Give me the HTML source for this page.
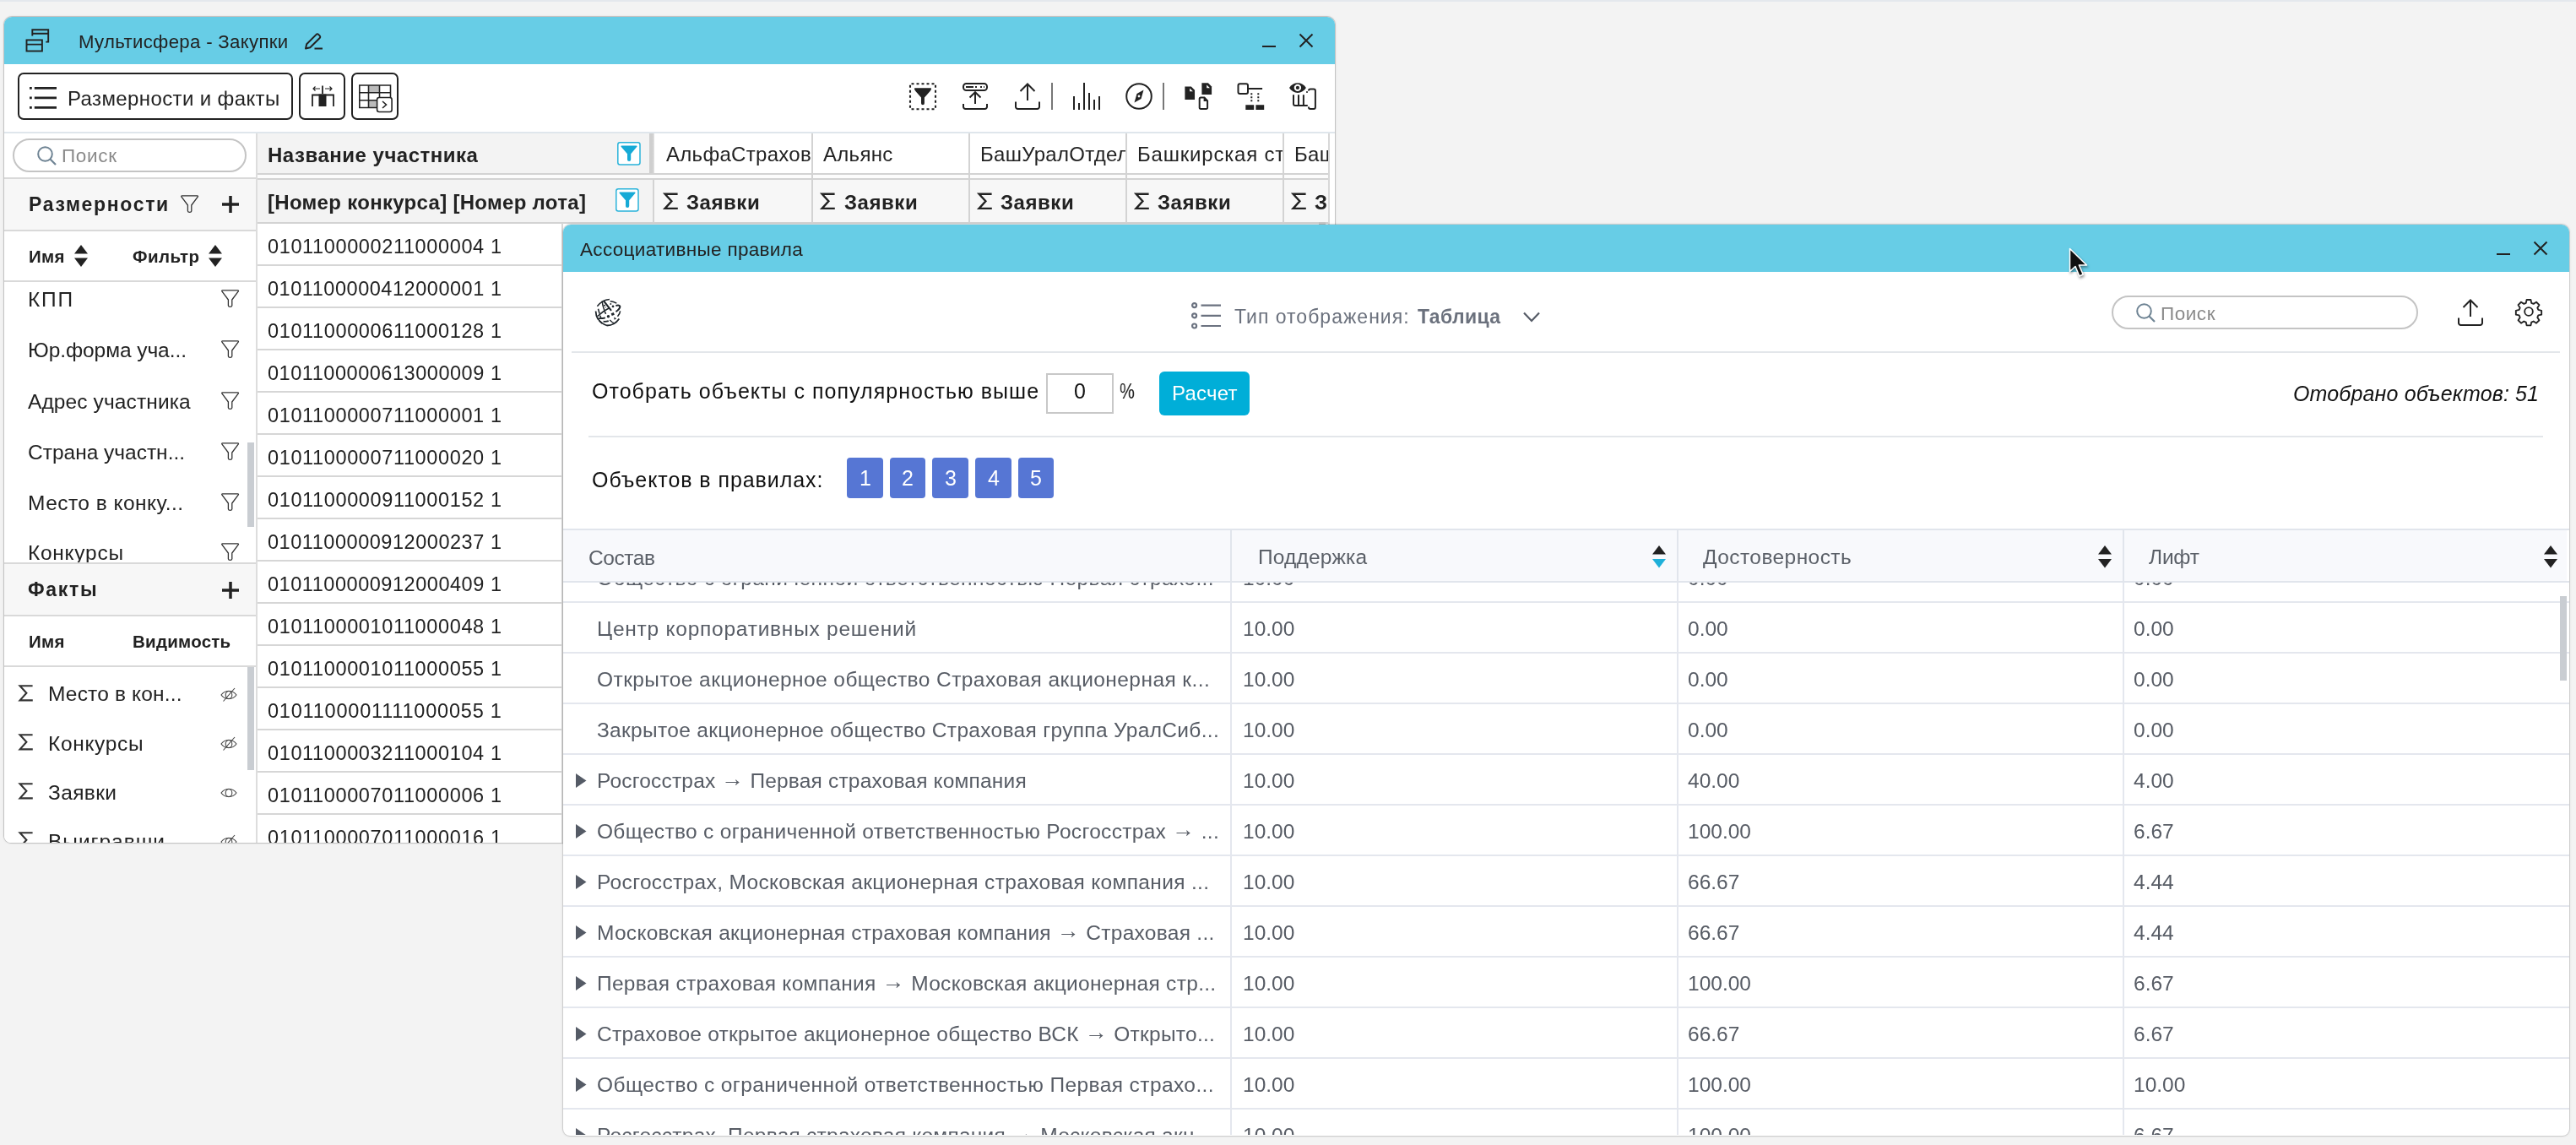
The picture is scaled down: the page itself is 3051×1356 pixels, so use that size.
<!DOCTYPE html>
<html lang="ru"><head><meta charset="utf-8"><title>Мультисфера - Закупки</title>
<style>
html,body{margin:0;padding:0}
body{width:3051px;height:1356px;overflow:hidden;background:#f3f3f3;position:relative;font-family:"Liberation Sans",sans-serif;color:#222}
div,span.t,svg{position:absolute;box-sizing:border-box}
span.t{white-space:nowrap;line-height:1;will-change:transform}
svg{overflow:visible}
span.t i{font-style:normal;position:relative;top:-2.5px;font-size:1.1em;line-height:0}
.k{fill:none;stroke:#222}
.f{fill:#222;stroke:none}
</style></head><body>
<div style="left:0.0px;top:0.0px;width:3051.0px;height:1.6px;background:#e4e8ed"></div>
<div style="left:5.0px;top:20.0px;width:1576.0px;height:978.0px;border-radius:9px 9px 8px 8px;overflow:hidden;background:#fff;box-shadow:0 0 0 1px rgba(0,0,0,.13),0 0 3px rgba(0,0,0,.22)"><div style="left:0.0px;top:0.0px;width:1576.0px;height:56.0px;background:#67cde6"></div>
<svg style="left:25.0px;top:14.0px;" width="29.0" height="28.0" viewBox="0 0 29 28" stroke-width="2"><path class="k" stroke-width="1.9" d="M8.3 8.6V1.2H27.2V15.6H24.3M8.3 5.7H27.2"/><rect class="k" stroke-width="1.9" x="1.5" y="13.4" width="18.4" height="13.1"/><path class="k" stroke-width="1.9" d="M1.5 18.6H19.9"/></svg>
<span class="t" style="left:88.3px;top:18.7px;font-size:22.2px;letter-spacing:0.33px;">Мультисфера - Закупки</span>
<svg style="left:355.0px;top:18.5px;" width="23.0" height="20.0" viewBox="0 0 23 20" stroke-width="2"><path class="k" d="M2 18.5l1.2-5.2L14.6 1.9a1.8 1.8 0 0 1 2.6 0l1.5 1.5a1.8 1.8 0 0 1 0 2.6L7.3 17.3z" stroke-linejoin="round"/><path class="k" d="M12.5 18.6H22"/></svg>
<div style="left:1490.0px;top:33.8px;width:16.0px;height:2.2px;background:#222"></div>
<svg style="left:1534.0px;top:20.0px;" width="16.0" height="16.0" viewBox="0 0 16 16" stroke-width="2"><path class="k" d="M0.5 0.5L15.5 15.5M15.5 0.5L0.5 15.5"/></svg>
<div style="left:0.0px;top:56.0px;width:1576.0px;height:81.5px;background:#fff;border-bottom:2px solid #dfe6ec"></div>
<div style="left:16.0px;top:66.4px;width:326.4px;height:55.3px;border:2px solid #222;border-radius:7px"></div>
<svg style="left:30.0px;top:83.0px;" width="32.0" height="26.0" viewBox="0 0 32 26" stroke-width="2"><path class="k" stroke-width="2.8" d="M5.8 1.4H32M5.8 12.9H32M5.8 24.3H32"/><path class="f" d="M0 0h2.8v2.8H0zM0 11.5h2.8v2.8H0zM0 22.9h2.8v2.8H0z"/></svg>
<span class="t" style="left:74.6px;top:84.5px;font-size:24px;letter-spacing:0.38px;">Размерности и факты</span>
<div style="left:349.2px;top:66.4px;width:55.3px;height:55.3px;border:2px solid #222;border-radius:7px"></div>
<svg style="left:364.0px;top:81.0px;" width="27.0" height="26.0" viewBox="0 0 27 26" stroke-width="2"><path class="f" d="M8.5 10.5h9V25h-9z"/><path class="k" stroke-width="1.8" d="M1 25V11.5H26V25M13 0.5V10"/><path class="k" stroke-width="1.2" d="M2 4H10M16 4H24M4.5 1.5L2 4l2.5 2.5M21.5 1.5L24 4l-2.5 2.5"/></svg>
<div style="left:411.3px;top:66.4px;width:55.3px;height:55.3px;border:2px solid #222;border-radius:7px"></div>
<svg style="left:420.0px;top:80.0px;" width="40.0" height="33.0" viewBox="0 0 40 33" stroke-width="2"><path fill="#bbb" d="M11.5 1h13v8.5h-13zM11.5 19h13v8h-13z"/><path class="k" stroke-width="1.6" d="M0.8 1H37.5V27.5H0.8zM0.8 9.7H37.5M0.8 18.7H37.5M11.5 1V27.5M24.5 1V27.5"/><rect x="21.6" y="15.5" width="17.5" height="17" rx="2.5" fill="#fff" stroke="#222" stroke-width="1.6"/><path class="k" stroke-width="1.6" d="M28 20l4.5 4-4.5 4"/></svg>
<svg style="left:1072.0px;top:77.8px;" width="32.0" height="32.0" viewBox="0 0 32 32" stroke-width="2"><rect class="k" x="1" y="1.2" width="30" height="30" stroke-width="2.1" stroke-dasharray="3 3" stroke-dashoffset="4.5"/><path class="f" d="M6.6 6.2H25.4Q26.3 6.4 26 7.6Q25.6 9 24.6 10L17.9 17.6V24.2a1.95 1.95 0 0 1-3.9 0V17.6L7.4 10Q6.4 9 6 7.6Q5.7 6.4 6.6 6.2z"/></svg>
<svg style="left:1135.0px;top:77.8px;" width="30.0" height="32.0" viewBox="0 0 30 32" stroke-width="2"><rect class="k" x="1" y="1" width="28" height="8" rx="3.5"/><path class="k" d="M4 5H19" stroke-dasharray="9 2 2 2"/><path class="k" d="M21 5h2M25 5h1"/><path class="k" d="M15 25V11.5M8.5 17.5L15 11.2l6.5 6.3"/><path class="k" d="M1 25v3.5a2.5 2.5 0 0 0 2.5 2.5h23a2.5 2.5 0 0 0 2.5-2.5V25"/></svg>
<svg style="left:1197.0px;top:77.8px;" width="30.0" height="32.0" viewBox="0 0 30 32" stroke-width="2"><path class="k" d="M15 21V1.6M6.5 10L15 1.5l8.5 8.5"/><path class="k" d="M1 22.5v6a2.5 2.5 0 0 0 2.5 2.5h23a2.5 2.5 0 0 0 2.5-2.5v-6"/></svg>
<div style="left:1240.0px;top:77.8px;width:2.0px;height:32.0px;background:#777"></div>
<svg style="left:1266.0px;top:77.8px;" width="32.0" height="32.0" viewBox="0 0 32 32" stroke-width="2"><path class="k" d="M1 32V16M7 32V24M13 32V0M19 32V12M25 32V20M31 32V16"/></svg>
<svg style="left:1327.6px;top:77.8px;" width="32.0" height="32.0" viewBox="0 0 32 32" stroke-width="2"><circle class="k" cx="16" cy="16" r="14.8"/><path class="f" d="M21.5 8.5L18.5 19 10.5 23.5 13.5 13z"/><circle cx="16" cy="16" r="1.4" fill="#fff"/></svg>
<div style="left:1372.0px;top:77.8px;width:2.0px;height:32.0px;background:#777"></div>
<svg style="left:1397.7px;top:77.8px;" width="33.0" height="32.0" viewBox="0 0 33 32" stroke-width="2"><path class="f" d="M0.4 4.4H7.8L12.05 8.7V20H0.4z"/><path class="f" d="M20.4 0.3H27.9L32.1 4.6V13.9H20.4z"/><path fill="#fff" d="M6.1 6.5V10.2H9.9zM26.2 2.6V6.2H30z"/><path class="k" d="M19.2 17.6H23.5L27.1 21.3V29.5a1.5 1.5 0 0 1-1.5 1.5H19.2a1.5 1.5 0 0 1-1.5-1.5V19.1a1.5 1.5 0 0 1 1.5-1.5z"/><path class="f" d="M22.6 17.6V22H27.1L23.5 17.6z"/></svg>
<svg style="left:1459.7px;top:77.8px;" width="33.0" height="32.0" viewBox="0 0 33 32" stroke-width="2"><rect class="k" x="1.5" y="1.3" width="11.5" height="11.6" rx="2"/><path class="k" d="M13 7.1H30.1"/><path class="k" d="M17.3 12.2V23M25.3 12.2V23" stroke-dasharray="2 2.05"/><path class="f" d="M10.3 26.3h9.9V32h-9.9zM22.4 26.3h9.8V32h-9.8z"/></svg>
<svg style="left:1522.0px;top:77.8px;" width="33.0" height="32.0" viewBox="0 0 33 32" stroke-width="2"><path class="f" d="M0 6.1C4.5-1.6 15.5-1.6 19.9 6.1 15.5 13.8 4.5 13.8 0 6.1z"/><circle cx="9.9" cy="5.9" r="4.2" fill="#fff"/><circle class="f" cx="9.9" cy="5.9" r="2.1"/><path class="k" d="M5 14.2V25a2 2 0 0 0 2 2H21.8M11 14.2V27M16.9 14.2V27"/><path class="k" d="M23 9.6V9.4a2 2 0 0 1 2-2h3.9a2 2 0 0 1 2 2V28.9a2 2 0 0 1-2 2H25a2 2 0 0 1-2-2V28.4"/><circle class="f" cx="21" cy="11" r="1.1"/></svg>
<div style="left:0.0px;top:138.0px;width:298.0px;height:840.0px;background:#fff"></div>
<div style="left:298.0px;top:138.0px;width:2.0px;height:840.0px;background:#ddd"></div>
<div style="left:10.2px;top:144.3px;width:277.3px;height:39.3px;border:2px solid #c4c4c4;border-radius:20px;background:#fff"></div>
<svg style="left:39.0px;top:152.5px;" width="23.0" height="23.0" viewBox="0 0 23 23" stroke-width="2"><circle cx="9.5" cy="9.5" r="8.3" fill="none" stroke="#6f8494" stroke-width="2"/><path d="M15.5 15.5L22 22" stroke="#6f8494" stroke-width="2.2" fill="none"/></svg>
<span class="t" style="left:67.5px;top:154.4px;font-size:22.5px;color:#8a8a8a;letter-spacing:0.69px;">Поиск</span>
<div style="left:0.0px;top:189.5px;width:298.0px;height:2.0px;background:#d9d9d9"></div>
<div style="left:0.0px;top:191.5px;width:298.0px;height:60.0px;background:#f7f7f7"></div>
<span class="t" style="left:28.5px;top:210.5px;font-size:23px;font-weight:700;letter-spacing:1.66px;">Размерности</span>
<svg style="left:209.0px;top:211.0px;" width="21.0" height="22.0" viewBox="0 0 21 22" stroke-width="2"><path d="M1.6 0.8H19.6Q21 1 20.2 2.2L12.8 12V19Q12.6 20.3 10.6 20.3Q8.6 20.3 8.4 19V12L1 2.2Q0.2 1 1.6 0.8z" fill="none" stroke="#333" stroke-width="1.3" stroke-linejoin="round"/></svg>
<svg style="left:258.0px;top:212.0px;" width="20.0" height="20.0" viewBox="0 0 20 20" stroke-width="2"><path d="M10 0V20M0 10H20" fill="none" stroke="#222" stroke-width="3.5"/></svg>
<div style="left:0.0px;top:251.5px;width:298.0px;height:2.0px;background:#d9d9d9"></div>
<span class="t" style="left:28.5px;top:273.8px;font-size:20.5px;font-weight:700;letter-spacing:0.31px;">Имя</span>
<span class="t" style="left:152.0px;top:273.8px;font-size:20.5px;font-weight:700;letter-spacing:0.50px;">Фильтр</span>
<svg style="left:83.0px;top:270.0px;" width="16.0" height="26.0" viewBox="0 0 16 26" stroke-width="2"><path class="f" d="M8 0L16 10.5H0zM8 26L16 15.5H0z"/></svg>
<svg style="left:242.0px;top:270.0px;" width="16.0" height="26.0" viewBox="0 0 16 26" stroke-width="2"><path class="f" d="M8 0L16 10.5H0zM8 26L16 15.5H0z"/></svg>
<div style="left:0.0px;top:312.0px;width:298.0px;height:2.0px;background:#d9d9d9"></div>
<span class="t" style="left:28.0px;top:323.0px;font-size:24.5px;letter-spacing:1.75px;">КПП</span>
<svg style="left:257.4px;top:323.4px;" width="21.2" height="21.0" viewBox="0 0 21.2 21" stroke-width="2"><path d="M1.6 0.8H19.6Q21 1 20.2 2.2L12.8 12V19Q12.6 20.3 10.6 20.3Q8.6 20.3 8.4 19V12L1 2.2Q0.2 1 1.6 0.8z" fill="none" stroke="#333" stroke-width="1.3" stroke-linejoin="round"/></svg>
<span class="t" style="left:28.0px;top:383.0px;font-size:24.5px;letter-spacing:-0.07px;">Юр.форма уча...</span>
<svg style="left:257.4px;top:383.4px;" width="21.2" height="21.0" viewBox="0 0 21.2 21" stroke-width="2"><path d="M1.6 0.8H19.6Q21 1 20.2 2.2L12.8 12V19Q12.6 20.3 10.6 20.3Q8.6 20.3 8.4 19V12L1 2.2Q0.2 1 1.6 0.8z" fill="none" stroke="#333" stroke-width="1.3" stroke-linejoin="round"/></svg>
<span class="t" style="left:28.0px;top:444.0px;font-size:24.5px;letter-spacing:0.11px;">Адрес участника</span>
<svg style="left:257.4px;top:444.4px;" width="21.2" height="21.0" viewBox="0 0 21.2 21" stroke-width="2"><path d="M1.6 0.8H19.6Q21 1 20.2 2.2L12.8 12V19Q12.6 20.3 10.6 20.3Q8.6 20.3 8.4 19V12L1 2.2Q0.2 1 1.6 0.8z" fill="none" stroke="#333" stroke-width="1.3" stroke-linejoin="round"/></svg>
<span class="t" style="left:28.0px;top:504.0px;font-size:24.5px;letter-spacing:-0.01px;">Страна участн...</span>
<svg style="left:257.4px;top:504.4px;" width="21.2" height="21.0" viewBox="0 0 21.2 21" stroke-width="2"><path d="M1.6 0.8H19.6Q21 1 20.2 2.2L12.8 12V19Q12.6 20.3 10.6 20.3Q8.6 20.3 8.4 19V12L1 2.2Q0.2 1 1.6 0.8z" fill="none" stroke="#333" stroke-width="1.3" stroke-linejoin="round"/></svg>
<span class="t" style="left:28.0px;top:563.7px;font-size:24.5px;letter-spacing:0.46px;">Место в конку...</span>
<svg style="left:257.4px;top:564.1px;" width="21.2" height="21.0" viewBox="0 0 21.2 21" stroke-width="2"><path d="M1.6 0.8H19.6Q21 1 20.2 2.2L12.8 12V19Q12.6 20.3 10.6 20.3Q8.6 20.3 8.4 19V12L1 2.2Q0.2 1 1.6 0.8z" fill="none" stroke="#333" stroke-width="1.3" stroke-linejoin="round"/></svg>
<span class="t" style="left:28.0px;top:623.0px;font-size:24.5px;letter-spacing:0.73px;">Конкурсы</span>
<svg style="left:257.4px;top:623.4px;" width="21.2" height="21.0" viewBox="0 0 21.2 21" stroke-width="2"><path d="M1.6 0.8H19.6Q21 1 20.2 2.2L12.8 12V19Q12.6 20.3 10.6 20.3Q8.6 20.3 8.4 19V12L1 2.2Q0.2 1 1.6 0.8z" fill="none" stroke="#333" stroke-width="1.3" stroke-linejoin="round"/></svg>
<div style="left:288.0px;top:504.0px;width:8.0px;height:100.0px;background:#c9cdd2"></div>
<div style="left:0.0px;top:646.0px;width:298.0px;height:2.0px;background:#d9d9d9"></div>
<div style="left:0.0px;top:648.0px;width:298.0px;height:60.0px;background:#f7f7f7"></div>
<span class="t" style="left:28.0px;top:667.3px;font-size:23px;font-weight:700;letter-spacing:1.69px;">Факты</span>
<svg style="left:258.0px;top:669.0px;" width="20.0" height="20.0" viewBox="0 0 20 20" stroke-width="2"><path d="M10 0V20M0 10H20" fill="none" stroke="#222" stroke-width="3.5"/></svg>
<div style="left:0.0px;top:708.0px;width:298.0px;height:2.0px;background:#d9d9d9"></div>
<span class="t" style="left:28.5px;top:729.6px;font-size:20.5px;font-weight:700;letter-spacing:0.31px;">Имя</span>
<span class="t" style="left:152.4px;top:729.6px;font-size:20.5px;font-weight:700;letter-spacing:0.25px;">Видимость</span>
<div style="left:0.0px;top:767.5px;width:298.0px;height:2.0px;background:#d9d9d9"></div>
<svg style="left:15.6px;top:791.2px;" width="19.0" height="19.7" viewBox="0 0 19 19.7" stroke-width="2"><path d="M17.6 1.3H2.6L10.4 9.8 2.6 18.4H17.8" fill="none" stroke="#333" stroke-width="2.1"/></svg>
<span class="t" style="left:52.0px;top:790.4px;font-size:24.5px;letter-spacing:0.17px;">Место в кон...</span>
<svg style="left:256.0px;top:795.8px;" width="20.0" height="14.0" viewBox="0 0 20 14" stroke-width="2"><path d="M1 7C5 1 15 1 19 7 15 13 5 13 1 7z" fill="none" stroke="#444" stroke-width="1.1"/><ellipse cx="10" cy="7" rx="3.8" ry="4.6" fill="none" stroke="#444" stroke-width="1.1"/><path d="M3.5 14.5L17 -1" stroke="#444" stroke-width="1.1"/></svg>
<svg style="left:15.6px;top:849.3px;" width="19.0" height="19.7" viewBox="0 0 19 19.7" stroke-width="2"><path d="M17.6 1.3H2.6L10.4 9.8 2.6 18.4H17.8" fill="none" stroke="#333" stroke-width="2.1"/></svg>
<span class="t" style="left:52.0px;top:848.5px;font-size:24.5px;letter-spacing:0.66px;">Конкурсы</span>
<svg style="left:256.0px;top:853.9px;" width="20.0" height="14.0" viewBox="0 0 20 14" stroke-width="2"><path d="M1 7C5 1 15 1 19 7 15 13 5 13 1 7z" fill="none" stroke="#444" stroke-width="1.1"/><ellipse cx="10" cy="7" rx="3.8" ry="4.6" fill="none" stroke="#444" stroke-width="1.1"/><path d="M3.5 14.5L17 -1" stroke="#444" stroke-width="1.1"/></svg>
<svg style="left:15.6px;top:907.3px;" width="19.0" height="19.7" viewBox="0 0 19 19.7" stroke-width="2"><path d="M17.6 1.3H2.6L10.4 9.8 2.6 18.4H17.8" fill="none" stroke="#333" stroke-width="2.1"/></svg>
<span class="t" style="left:52.0px;top:906.5px;font-size:24.5px;letter-spacing:0.38px;">Заявки</span>
<svg style="left:256.0px;top:911.9px;" width="20.0" height="14.0" viewBox="0 0 20 14" stroke-width="2"><path d="M1 7C5 1 15 1 19 7 15 13 5 13 1 7z" fill="none" stroke="#444" stroke-width="1.1"/><ellipse cx="10" cy="7" rx="3.8" ry="4.6" fill="none" stroke="#444" stroke-width="1.1"/></svg>
<svg style="left:15.6px;top:965.3px;" width="19.0" height="19.7" viewBox="0 0 19 19.7" stroke-width="2"><path d="M17.6 1.3H2.6L10.4 9.8 2.6 18.4H17.8" fill="none" stroke="#333" stroke-width="2.1"/></svg>
<span class="t" style="left:52.0px;top:964.5px;font-size:24.5px;letter-spacing:0.98px;">Выигравши</span>
<svg style="left:256.0px;top:969.9px;" width="20.0" height="14.0" viewBox="0 0 20 14" stroke-width="2"><path d="M1 7C5 1 15 1 19 7 15 13 5 13 1 7z" fill="none" stroke="#444" stroke-width="1.1"/><ellipse cx="10" cy="7" rx="3.8" ry="4.6" fill="none" stroke="#444" stroke-width="1.1"/><path d="M3.5 14.5L17 -1" stroke="#444" stroke-width="1.1"/></svg>
<div style="left:288.0px;top:770.0px;width:8.0px;height:122.0px;background:#c9cdd2"></div>
<div style="left:300.0px;top:138.0px;width:1276.0px;height:840.0px;background:#fff"></div>
<div style="left:300.0px;top:138.4px;width:1268.0px;height:106.5px;background:#fcfcfc"></div>
<div style="left:300.0px;top:138.4px;width:465.0px;height:47.0px;background:#f3f3f3"></div>
<span class="t" style="left:312.0px;top:152.3px;font-size:24px;font-weight:700;letter-spacing:0.51px;">Название участника</span>
<svg style="left:726.1px;top:147.9px;" width="27.8" height="27.8" viewBox="0 0 27.8 27.8" stroke-width="2"><rect x="0.8" y="0.8" width="26.2" height="26.2" rx="2.5" fill="#fff" stroke="#29b3da" stroke-width="1.5"/><path d="M5 4.6H23Q24 4.8 23.4 5.8L16.2 14.2V21a2.1 2.1 0 0 1-4.2 0V14.2L4.6 5.8Q4 4.8 5 4.6z" fill="#16aad6"/></svg>
<div style="left:764.3px;top:138.4px;width:5.6px;height:48.8px;background:linear-gradient(90deg,#cfcfcf 60%,#e2e2e2)"></div>
<div style="left:300.0px;top:185.2px;width:1268.0px;height:2.1px;background:#d3d3d3"></div>
<div style="left:300.0px;top:190.8px;width:1268.0px;height:1.9px;background:#d3d3d3"></div>
<div style="left:300.0px;top:192.7px;width:469.0px;height:50.2px;background:#f3f3f3"></div>
<div style="left:768.2px;top:192.7px;width:1.7px;height:52.0px;background:#d3d3d3"></div>
<span class="t" style="left:312.0px;top:207.7px;font-size:24px;font-weight:700;letter-spacing:0.30px;">[Номер конкурса] [Номер лота]</span>
<svg style="left:724.2px;top:203.0px;" width="27.8" height="27.8" viewBox="0 0 27.8 27.8" stroke-width="2"><rect x="0.8" y="0.8" width="26.2" height="26.2" rx="2.5" fill="#fff" stroke="#29b3da" stroke-width="1.5"/><path d="M5 4.6H23Q24 4.8 23.4 5.8L16.2 14.2V21a2.1 2.1 0 0 1-4.2 0V14.2L4.6 5.8Q4 4.8 5 4.6z" fill="#16aad6"/></svg>
<div style="left:769.9px;top:138.4px;width:186.1px;height:46.8px;background:#fff;overflow:hidden"><span class="t" style="left:14.0px;top:12.9px;font-size:24px;letter-spacing:0.30px;">АльфаСтрахование</span></div>
<div style="left:769.9px;top:192.7px;width:186.1px;height:50.2px;background:#f7f7f7;overflow:hidden"><svg style="left:10.3px;top:15.3px;" width="19.0" height="20.6" viewBox="0 0 19 19.7" stroke-width="2"><path d="M17.6 1.3H2.6L10.4 9.8 2.6 18.4H17.8" fill="none" stroke="#222" stroke-width="2.4"/></svg><span class="t" style="left:38.6px;top:15.3px;font-size:24px;font-weight:700;letter-spacing:0.55px;">Заявки</span></div>
<div style="left:956.0px;top:138.4px;width:1.9px;height:106.5px;background:#d3d3d3"></div>
<div style="left:957.8px;top:138.4px;width:184.1px;height:46.8px;background:#fff;overflow:hidden"><span class="t" style="left:12.2px;top:12.9px;font-size:24px;letter-spacing:0.30px;">Альянс</span></div>
<div style="left:957.8px;top:192.7px;width:184.1px;height:50.2px;background:#f7f7f7;overflow:hidden"><svg style="left:8.5px;top:15.3px;" width="19.0" height="20.6" viewBox="0 0 19 19.7" stroke-width="2"><path d="M17.6 1.3H2.6L10.4 9.8 2.6 18.4H17.8" fill="none" stroke="#222" stroke-width="2.4"/></svg><span class="t" style="left:36.8px;top:15.3px;font-size:24px;font-weight:700;letter-spacing:0.55px;">Заявки</span></div>
<div style="left:1141.9px;top:138.4px;width:1.9px;height:106.5px;background:#d3d3d3"></div>
<div style="left:1143.7px;top:138.4px;width:184.1px;height:46.8px;background:#fff;overflow:hidden"><span class="t" style="left:12.2px;top:12.9px;font-size:24px;letter-spacing:0.30px;">БашУралОтделка</span></div>
<div style="left:1143.7px;top:192.7px;width:184.1px;height:50.2px;background:#f7f7f7;overflow:hidden"><svg style="left:8.5px;top:15.3px;" width="19.0" height="20.6" viewBox="0 0 19 19.7" stroke-width="2"><path d="M17.6 1.3H2.6L10.4 9.8 2.6 18.4H17.8" fill="none" stroke="#222" stroke-width="2.4"/></svg><span class="t" style="left:36.8px;top:15.3px;font-size:24px;font-weight:700;letter-spacing:0.55px;">Заявки</span></div>
<div style="left:1327.8px;top:138.4px;width:1.9px;height:106.5px;background:#d3d3d3"></div>
<div style="left:1329.6px;top:138.4px;width:184.1px;height:46.8px;background:#fff;overflow:hidden"><span class="t" style="left:12.2px;top:12.9px;font-size:24px;letter-spacing:0.80px;">Башкирская страховая</span></div>
<div style="left:1329.6px;top:192.7px;width:184.1px;height:50.2px;background:#f7f7f7;overflow:hidden"><svg style="left:8.5px;top:15.3px;" width="19.0" height="20.6" viewBox="0 0 19 19.7" stroke-width="2"><path d="M17.6 1.3H2.6L10.4 9.8 2.6 18.4H17.8" fill="none" stroke="#222" stroke-width="2.4"/></svg><span class="t" style="left:36.8px;top:15.3px;font-size:24px;font-weight:700;letter-spacing:0.55px;">Заявки</span></div>
<div style="left:1513.7px;top:138.4px;width:1.9px;height:106.5px;background:#d3d3d3"></div>
<div style="left:1515.5px;top:138.4px;width:52.5px;height:46.8px;background:#fff;overflow:hidden"><span class="t" style="left:12.2px;top:12.9px;font-size:24px;letter-spacing:0.30px;">Башкирская</span></div>
<div style="left:1515.5px;top:192.7px;width:52.5px;height:50.2px;background:#f7f7f7;overflow:hidden"><svg style="left:8.5px;top:15.3px;" width="19.0" height="20.6" viewBox="0 0 19 19.7" stroke-width="2"><path d="M17.6 1.3H2.6L10.4 9.8 2.6 18.4H17.8" fill="none" stroke="#222" stroke-width="2.4"/></svg><span class="t" style="left:36.8px;top:15.3px;font-size:24px;font-weight:700;letter-spacing:0.55px;">Заявки</span></div>
<div style="left:300.0px;top:242.9px;width:1268.0px;height:1.8px;background:#d3d3d3"></div>
<div style="left:1568.0px;top:138.0px;width:8.0px;height:840.0px;background:#fff"></div>
<div style="left:1568.0px;top:138.0px;width:2.0px;height:840.0px;background:#d8d8d8"></div>
<div style="left:1557.0px;top:243.0px;width:8.0px;height:3.0px;background:#c8c8c8"></div>
<div style="left:300.0px;top:293.0px;width:362.0px;height:2.0px;background:#d6d6d6"></div>
<span class="t" style="left:312.0px;top:260.5px;font-size:23.5px;letter-spacing:0.63px;">0101100000211000004 1</span>
<div style="left:300.0px;top:343.0px;width:362.0px;height:2.0px;background:#d6d6d6"></div>
<span class="t" style="left:312.0px;top:310.5px;font-size:23.5px;letter-spacing:0.54px;">0101100000412000001 1</span>
<div style="left:300.0px;top:393.0px;width:362.0px;height:2.0px;background:#d6d6d6"></div>
<span class="t" style="left:312.0px;top:360.5px;font-size:23.5px;letter-spacing:0.63px;">0101100000611000128 1</span>
<div style="left:300.0px;top:443.0px;width:362.0px;height:2.0px;background:#d6d6d6"></div>
<span class="t" style="left:312.0px;top:410.5px;font-size:23.5px;letter-spacing:0.54px;">0101100000613000009 1</span>
<div style="left:300.0px;top:493.0px;width:362.0px;height:2.0px;background:#d6d6d6"></div>
<span class="t" style="left:312.0px;top:460.5px;font-size:23.5px;letter-spacing:0.63px;">0101100000711000001 1</span>
<div style="left:300.0px;top:543.0px;width:362.0px;height:2.0px;background:#d6d6d6"></div>
<span class="t" style="left:312.0px;top:510.5px;font-size:23.5px;letter-spacing:0.63px;">0101100000711000020 1</span>
<div style="left:300.0px;top:593.0px;width:362.0px;height:2.0px;background:#d6d6d6"></div>
<span class="t" style="left:312.0px;top:560.5px;font-size:23.5px;letter-spacing:0.63px;">0101100000911000152 1</span>
<div style="left:300.0px;top:643.0px;width:362.0px;height:2.0px;background:#d6d6d6"></div>
<span class="t" style="left:312.0px;top:610.5px;font-size:23.5px;letter-spacing:0.54px;">0101100000912000237 1</span>
<div style="left:300.0px;top:693.0px;width:362.0px;height:2.0px;background:#d6d6d6"></div>
<span class="t" style="left:312.0px;top:660.5px;font-size:23.5px;letter-spacing:0.54px;">0101100000912000409 1</span>
<div style="left:300.0px;top:743.0px;width:362.0px;height:2.0px;background:#d6d6d6"></div>
<span class="t" style="left:312.0px;top:710.5px;font-size:23.5px;letter-spacing:0.63px;">0101100001011000048 1</span>
<div style="left:300.0px;top:793.0px;width:362.0px;height:2.0px;background:#d6d6d6"></div>
<span class="t" style="left:312.0px;top:760.5px;font-size:23.5px;letter-spacing:0.63px;">0101100001011000055 1</span>
<div style="left:300.0px;top:843.0px;width:362.0px;height:2.0px;background:#d6d6d6"></div>
<span class="t" style="left:312.0px;top:810.5px;font-size:23.5px;letter-spacing:0.80px;">0101100001111000055 1</span>
<div style="left:300.0px;top:893.0px;width:362.0px;height:2.0px;background:#d6d6d6"></div>
<span class="t" style="left:312.0px;top:860.5px;font-size:23.5px;letter-spacing:0.63px;">0101100003211000104 1</span>
<div style="left:300.0px;top:943.0px;width:362.0px;height:2.0px;background:#d6d6d6"></div>
<span class="t" style="left:312.0px;top:910.5px;font-size:23.5px;letter-spacing:0.63px;">0101100007011000006 1</span>
<div style="left:300.0px;top:993.0px;width:362.0px;height:2.0px;background:#d6d6d6"></div>
<span class="t" style="left:312.0px;top:960.5px;font-size:23.5px;letter-spacing:0.63px;">0101100007011000016 1</span>
<div style="left:660.0px;top:244.0px;width:2.0px;height:740.0px;background:#d6d6d6"></div></div>
<div style="left:666.5px;top:266.0px;width:2376.3px;height:1078.5px;border-radius:9px 9px 8px 8px;overflow:hidden;background:#fff;box-shadow:0 0 0 1px rgba(0,0,0,.09),0 0 3px rgba(0,0,0,.22)"><div style="left:0.0px;top:0.0px;width:2376.3px;height:56.0px;background:#67cde6"></div>
<span class="t" style="left:20.5px;top:18.5px;font-size:22.5px;letter-spacing:0.32px;">Ассоциативные правила</span>
<div style="left:2290.5px;top:34.0px;width:16.0px;height:2.2px;background:#222"></div>
<svg style="left:2334.5px;top:20.3px;" width="16.0" height="16.0" viewBox="0 0 16 16" stroke-width="2"><path class="k" d="M0.5 0.5L15.5 15.5M15.5 0.5L0.5 15.5"/></svg>
<svg style="left:38.4px;top:87.9px;" width="31.0" height="33.0" viewBox="0 0 31 33" stroke-width="2"><g transform="scale(0.0524) translate(-285 -265)" fill="none" stroke="#1f262b" stroke-width="29" stroke-linecap="butt"><path d="M330 432Q440 290 608 275"/><path d="M622 318Q700 325 768 362"/><path d="M750 418Q838 395 846 440Q838 500 752 552" stroke-width="38"/><path d="M850 538Q842 600 790 662"/><path d="M826 712Q722 862 548 866" stroke-width="34"/><path d="M552 866Q420 822 348 718"/><path d="M296 542Q300 650 346 722" stroke-width="34"/><path d="M468 300L648 528" stroke-width="40"/><path d="M440 312Q450 420 492 522"/><path d="M338 655Q470 530 602 470"/><path d="M352 488L382 600"/><path d="M495 540L525 605"/><path d="M390 640L420 700"/><path d="M352 705Q430 715 512 692" stroke-width="34"/><path d="M378 758L442 822" stroke-width="34"/><path d="M468 775Q530 780 586 762" stroke-width="34"/><path d="M614 740Q650 785 702 812"/><g fill="#1f262b" stroke="none"><circle cx="495" cy="415" r="19"/><circle cx="522" cy="456" r="11"/><circle cx="635" cy="380" r="18"/><circle cx="686" cy="436" r="26"/><circle cx="580" cy="660" r="33"/><path d="M640 595L700 570 722 622 662 648z"/><path d="M708 675L765 708 716 738z"/></g></g></svg>
<svg style="left:744.2px;top:92.2px;" width="35.0" height="32.0" viewBox="0 0 35 32" stroke-width="2"><g fill="none" stroke="#6b7280" stroke-width="2.2"><circle cx="3.6" cy="3.6" r="2.5"/><circle cx="3.6" cy="15.8" r="2.5"/><circle cx="3.6" cy="28" r="2.5"/><path d="M11.5 3.6H35M11.5 15.8H35M11.5 28H35"/></g></svg>
<span class="t" style="left:795.9px;top:97.8px;font-size:23px;color:#6b717d;letter-spacing:1.01px;">Тип отображения:</span>
<span class="t" style="left:1012.2px;top:97.8px;font-size:23px;font-weight:700;color:#6b717d;letter-spacing:0.37px;">Таблица</span>
<svg style="left:1137.2px;top:102.5px;" width="20.0" height="13.0" viewBox="0 0 20 13" stroke-width="2"><path d="M1 1.5L10 11 19 1.5" fill="none" stroke="#555b66" stroke-width="2.2"/></svg>
<div style="left:1834.7px;top:84.3px;width:363.3px;height:39.3px;border:2px solid #c4c4c4;border-radius:20px;background:#fff"></div>
<svg style="left:1863.0px;top:92.5px;" width="23.0" height="23.0" viewBox="0 0 23 23" stroke-width="2"><circle cx="9.5" cy="9.5" r="8.3" fill="none" stroke="#6f8494" stroke-width="2"/><path d="M15.5 15.5L22 22" stroke="#6f8494" stroke-width="2.2" fill="none"/></svg>
<span class="t" style="left:1892.7px;top:94.6px;font-size:22.5px;color:#8a8a8a;letter-spacing:0.54px;">Поиск</span>
<svg style="left:2244.0px;top:88.0px;" width="30.0" height="32.0" viewBox="0 0 30 32" stroke-width="2"><path class="k" d="M15 21V1.6M6.5 10L15 1.5l8.5 8.5"/><path class="k" d="M1 22.5v6a2.5 2.5 0 0 0 2.5 2.5h23a2.5 2.5 0 0 0 2.5-2.5v-6"/></svg>
<svg style="left:2312.5px;top:87.2px;transform:scale(.93)" width="32.0" height="32.0" viewBox="0 0 32 32" stroke-width="2"><g transform="translate(16 16)"><path class="k" stroke-linejoin="round" d="M-2.6 -15h5.2l.9 4.1 2.6 1.1 3.6-2.3 3.7 3.7-2.3 3.6 1.1 2.6 4.1.9v5.2l-4.1.9-1.1 2.6 2.3 3.6-3.7 3.7-3.6-2.3-2.6 1.1-.9 4.1h-5.2l-.9-4.1-2.6-1.1-3.6 2.3-3.7-3.7 2.3-3.6-1.1-2.6-4.1-.9v-5.2l4.1-.9 1.1-2.6-2.3-3.6 3.7-3.7 3.6 2.3 2.6-1.1z"/><circle class="k" r="5.2"/></g></svg>
<div style="left:10.5px;top:150.0px;width:2355.0px;height:2.0px;background:#e3e6ea"></div>
<span class="t" style="left:34.5px;top:184.8px;font-size:25px;color:#111;letter-spacing:1.03px;">Отобрать объекты с популярностью выше</span>
<div style="left:572.5px;top:176.0px;width:80.0px;height:48.0px;border:2px solid #c8c8c8;background:#fff"></div>
<span class="t" style="left:605.8px;top:185.4px;font-size:25px;color:#111;">0</span>
<span class="t" style="left:659.5px;top:185.0px;font-size:25px;color:#111;transform:scaleX(.8);transform-origin:0 0;">%</span>
<div style="left:706.3px;top:174.0px;width:107.2px;height:52.0px;background:#00aed8;border-radius:6px"></div>
<span class="t" style="left:721.3px;top:188.4px;font-size:24px;color:#fff;letter-spacing:0.25px;">Расчет</span>
<span class="t" style="left:2049.5px;top:187.8px;font-size:25px;color:#111;letter-spacing:0.14px;font-style:italic;">Отобрано объектов: 51</span>
<div style="left:30.2px;top:249.6px;width:2315.8px;height:2.0px;background:#e3e6ea"></div>
<span class="t" style="left:34.5px;top:289.5px;font-size:25px;color:#111;letter-spacing:0.93px;">Объектов в правилах:</span>
<div style="left:336.5px;top:276.0px;width:42.5px;height:47.6px;background:#5676d4;border-radius:4px"></div>
<span class="t" style="left:351.0px;top:287.8px;font-size:25px;color:#fff;">1</span>
<div style="left:387.2px;top:276.0px;width:42.5px;height:47.6px;background:#5676d4;border-radius:4px"></div>
<span class="t" style="left:401.7px;top:287.8px;font-size:25px;color:#fff;">2</span>
<div style="left:437.8px;top:276.0px;width:42.5px;height:47.6px;background:#5676d4;border-radius:4px"></div>
<span class="t" style="left:452.3px;top:287.8px;font-size:25px;color:#fff;">3</span>
<div style="left:488.5px;top:276.0px;width:42.5px;height:47.6px;background:#5676d4;border-radius:4px"></div>
<span class="t" style="left:503.0px;top:287.8px;font-size:25px;color:#fff;">4</span>
<div style="left:539.1px;top:276.0px;width:42.5px;height:47.6px;background:#5676d4;border-radius:4px"></div>
<span class="t" style="left:553.6px;top:287.8px;font-size:25px;color:#fff;">5</span>
<div style="left:0.0px;top:359.6px;width:2376.3px;height:2.0px;background:#e1e5ec"></div>
<div style="left:0.0px;top:423.8px;width:2376.3px;height:654.7px;overflow:hidden"><div style="left:0.0px;top:21.8px;width:2376.3px;height:2.0px;background:#e4e7ee"></div>
<span class="t" style="left:40.5px;top:-17.2px;font-size:24.5px;color:#575c65;letter-spacing:0.41px;">Общество с ограниченной ответственностью Первая страхо...</span>
<span class="t" style="left:805.1px;top:-17.2px;font-size:24.5px;color:#575c65;">10.00</span>
<span class="t" style="left:1332.5px;top:-17.2px;font-size:24.5px;color:#575c65;">0.00</span>
<span class="t" style="left:1860.5px;top:-17.2px;font-size:24.5px;color:#575c65;">0.00</span>
<div style="left:0.0px;top:81.8px;width:2376.3px;height:2.0px;background:#e4e7ee"></div>
<span class="t" style="left:40.5px;top:42.8px;font-size:24.5px;color:#575c65;letter-spacing:0.76px;">Центр корпоративных решений</span>
<span class="t" style="left:805.1px;top:42.8px;font-size:24.5px;color:#575c65;">10.00</span>
<span class="t" style="left:1332.5px;top:42.8px;font-size:24.5px;color:#575c65;">0.00</span>
<span class="t" style="left:1860.5px;top:42.8px;font-size:24.5px;color:#575c65;">0.00</span>
<div style="left:0.0px;top:141.8px;width:2376.3px;height:2.0px;background:#e4e7ee"></div>
<span class="t" style="left:40.5px;top:102.8px;font-size:24.5px;color:#575c65;letter-spacing:0.43px;">Открытое акционерное общество Страховая акционерная к...</span>
<span class="t" style="left:805.1px;top:102.8px;font-size:24.5px;color:#575c65;">10.00</span>
<span class="t" style="left:1332.5px;top:102.8px;font-size:24.5px;color:#575c65;">0.00</span>
<span class="t" style="left:1860.5px;top:102.8px;font-size:24.5px;color:#575c65;">0.00</span>
<div style="left:0.0px;top:201.8px;width:2376.3px;height:2.0px;background:#e4e7ee"></div>
<span class="t" style="left:40.5px;top:162.8px;font-size:24.5px;color:#575c65;letter-spacing:0.32px;">Закрытое акционерное общество Страховая группа УралСиб...</span>
<span class="t" style="left:805.1px;top:162.8px;font-size:24.5px;color:#575c65;">10.00</span>
<span class="t" style="left:1332.5px;top:162.8px;font-size:24.5px;color:#575c65;">0.00</span>
<span class="t" style="left:1860.5px;top:162.8px;font-size:24.5px;color:#575c65;">0.00</span>
<div style="left:0.0px;top:261.8px;width:2376.3px;height:2.0px;background:#e4e7ee"></div>
<span class="t" style="left:40.5px;top:222.8px;font-size:24.5px;color:#575c65;letter-spacing:0.18px;">Росгосстрах <i>→</i> Первая страховая компания</span>
<span class="t" style="left:805.1px;top:222.8px;font-size:24.5px;color:#575c65;">10.00</span>
<span class="t" style="left:1332.5px;top:222.8px;font-size:24.5px;color:#575c65;">40.00</span>
<span class="t" style="left:1860.5px;top:222.8px;font-size:24.5px;color:#575c65;">4.00</span>
<svg style="left:15.2px;top:226.1px;" width="13.0" height="17.0" viewBox="0 0 13 17" stroke-width="2"><path d="M0 0L12.5 8.5 0 17z" fill="#555b66"/></svg>
<div style="left:0.0px;top:321.8px;width:2376.3px;height:2.0px;background:#e4e7ee"></div>
<span class="t" style="left:40.5px;top:282.8px;font-size:24.5px;color:#575c65;letter-spacing:0.31px;">Общество с ограниченной ответственностью Росгосстрах <i>→</i> ...</span>
<span class="t" style="left:805.1px;top:282.8px;font-size:24.5px;color:#575c65;">10.00</span>
<span class="t" style="left:1332.5px;top:282.8px;font-size:24.5px;color:#575c65;">100.00</span>
<span class="t" style="left:1860.5px;top:282.8px;font-size:24.5px;color:#575c65;">6.67</span>
<svg style="left:15.2px;top:286.1px;" width="13.0" height="17.0" viewBox="0 0 13 17" stroke-width="2"><path d="M0 0L12.5 8.5 0 17z" fill="#555b66"/></svg>
<div style="left:0.0px;top:381.8px;width:2376.3px;height:2.0px;background:#e4e7ee"></div>
<span class="t" style="left:40.5px;top:342.8px;font-size:24.5px;color:#575c65;letter-spacing:0.34px;">Росгосстрах, Московская акционерная страховая компания ...</span>
<span class="t" style="left:805.1px;top:342.8px;font-size:24.5px;color:#575c65;">10.00</span>
<span class="t" style="left:1332.5px;top:342.8px;font-size:24.5px;color:#575c65;">66.67</span>
<span class="t" style="left:1860.5px;top:342.8px;font-size:24.5px;color:#575c65;">4.44</span>
<svg style="left:15.2px;top:346.1px;" width="13.0" height="17.0" viewBox="0 0 13 17" stroke-width="2"><path d="M0 0L12.5 8.5 0 17z" fill="#555b66"/></svg>
<div style="left:0.0px;top:441.8px;width:2376.3px;height:2.0px;background:#e4e7ee"></div>
<span class="t" style="left:40.5px;top:402.8px;font-size:24.5px;color:#575c65;letter-spacing:0.28px;">Московская акционерная страховая компания <i>→</i> Страховая ...</span>
<span class="t" style="left:805.1px;top:402.8px;font-size:24.5px;color:#575c65;">10.00</span>
<span class="t" style="left:1332.5px;top:402.8px;font-size:24.5px;color:#575c65;">66.67</span>
<span class="t" style="left:1860.5px;top:402.8px;font-size:24.5px;color:#575c65;">4.44</span>
<svg style="left:15.2px;top:406.1px;" width="13.0" height="17.0" viewBox="0 0 13 17" stroke-width="2"><path d="M0 0L12.5 8.5 0 17z" fill="#555b66"/></svg>
<div style="left:0.0px;top:501.8px;width:2376.3px;height:2.0px;background:#e4e7ee"></div>
<span class="t" style="left:40.5px;top:462.8px;font-size:24.5px;color:#575c65;letter-spacing:0.31px;">Первая страховая компания <i>→</i> Московская акционерная стр...</span>
<span class="t" style="left:805.1px;top:462.8px;font-size:24.5px;color:#575c65;">10.00</span>
<span class="t" style="left:1332.5px;top:462.8px;font-size:24.5px;color:#575c65;">100.00</span>
<span class="t" style="left:1860.5px;top:462.8px;font-size:24.5px;color:#575c65;">6.67</span>
<svg style="left:15.2px;top:466.1px;" width="13.0" height="17.0" viewBox="0 0 13 17" stroke-width="2"><path d="M0 0L12.5 8.5 0 17z" fill="#555b66"/></svg>
<div style="left:0.0px;top:561.8px;width:2376.3px;height:2.0px;background:#e4e7ee"></div>
<span class="t" style="left:40.5px;top:522.8px;font-size:24.5px;color:#575c65;letter-spacing:0.27px;">Страховое открытое акционерное общество ВСК <i>→</i> Открыто...</span>
<span class="t" style="left:805.1px;top:522.8px;font-size:24.5px;color:#575c65;">10.00</span>
<span class="t" style="left:1332.5px;top:522.8px;font-size:24.5px;color:#575c65;">66.67</span>
<span class="t" style="left:1860.5px;top:522.8px;font-size:24.5px;color:#575c65;">6.67</span>
<svg style="left:15.2px;top:526.1px;" width="13.0" height="17.0" viewBox="0 0 13 17" stroke-width="2"><path d="M0 0L12.5 8.5 0 17z" fill="#555b66"/></svg>
<div style="left:0.0px;top:621.8px;width:2376.3px;height:2.0px;background:#e4e7ee"></div>
<span class="t" style="left:40.5px;top:582.8px;font-size:24.5px;color:#575c65;letter-spacing:0.41px;">Общество с ограниченной ответственностью Первая страхо...</span>
<span class="t" style="left:805.1px;top:582.8px;font-size:24.5px;color:#575c65;">10.00</span>
<span class="t" style="left:1332.5px;top:582.8px;font-size:24.5px;color:#575c65;">100.00</span>
<span class="t" style="left:1860.5px;top:582.8px;font-size:24.5px;color:#575c65;">10.00</span>
<svg style="left:15.2px;top:586.1px;" width="13.0" height="17.0" viewBox="0 0 13 17" stroke-width="2"><path d="M0 0L12.5 8.5 0 17z" fill="#555b66"/></svg>
<div style="left:0.0px;top:681.8px;width:2376.3px;height:2.0px;background:#e4e7ee"></div>
<span class="t" style="left:40.5px;top:642.8px;font-size:24.5px;color:#575c65;letter-spacing:0.24px;">Росгосстрах, Первая страховая компания <i>→</i> Московская акц...</span>
<span class="t" style="left:805.1px;top:642.8px;font-size:24.5px;color:#575c65;">10.00</span>
<span class="t" style="left:1332.5px;top:642.8px;font-size:24.5px;color:#575c65;">100.00</span>
<span class="t" style="left:1860.5px;top:642.8px;font-size:24.5px;color:#575c65;">6.67</span>
<svg style="left:15.2px;top:646.1px;" width="13.0" height="17.0" viewBox="0 0 13 17" stroke-width="2"><path d="M0 0L12.5 8.5 0 17z" fill="#555b66"/></svg>
<div style="left:790.5px;top:0.0px;width:2.0px;height:700.0px;background:#e4e7ee"></div>
<div style="left:1319.0px;top:0.0px;width:2.0px;height:700.0px;background:#e4e7ee"></div>
<div style="left:1847.3px;top:0.0px;width:2.0px;height:700.0px;background:#e4e7ee"></div>
<div style="left:2365.9px;top:15.8px;width:7.6px;height:100.0px;background:#c9cdd2"></div></div>
<div style="left:0.0px;top:361.6px;width:2373.3px;height:60.4px;background:#f8f9fc"></div>
<div style="left:0.0px;top:422.0px;width:2376.3px;height:2.0px;background:#e1e5ec"></div>
<div style="left:790.5px;top:361.6px;width:2.0px;height:62.0px;background:#e1e5ec"></div>
<div style="left:1319.0px;top:361.6px;width:2.0px;height:62.0px;background:#e1e5ec"></div>
<div style="left:1847.3px;top:361.6px;width:2.0px;height:62.0px;background:#e1e5ec"></div>
<span class="t" style="left:30.7px;top:382.6px;font-size:24.5px;color:#5b6068;letter-spacing:-0.43px;">Состав</span>
<span class="t" style="left:823.3px;top:382.3px;font-size:24.5px;color:#5b6068;letter-spacing:0.17px;">Поддержка</span>
<span class="t" style="left:1350.2px;top:382.3px;font-size:24.5px;color:#5b6068;letter-spacing:0.42px;">Достоверность</span>
<span class="t" style="left:1878.5px;top:382.3px;font-size:24.5px;color:#5b6068;letter-spacing:-0.20px;">Лифт</span>
<svg style="left:1290.3px;top:380.0px;" width="16.0" height="26.5" viewBox="0 0 16 26.5" stroke-width="2"><path fill="#222" d="M8 0L16 10.5H0z"/><path fill="#1fb0d9" d="M8 26.5L16 16H0z"/></svg>
<svg style="left:1818.5px;top:380.0px;" width="16.0" height="26.5" viewBox="0 0 16 26.5" stroke-width="2"><path fill="#222" d="M8 0L16 10.5H0z"/><path fill="#222" d="M8 26.5L16 16H0z"/></svg>
<svg style="left:2346.5px;top:380.0px;" width="16.0" height="26.5" viewBox="0 0 16 26.5" stroke-width="2"><path fill="#222" d="M8 0L16 10.5H0z"/><path fill="#222" d="M8 26.5L16 16H0z"/></svg></div>
<svg style="left:2450.0px;top:292.5px;filter:drop-shadow(1px 2px 1.5px rgba(0,0,0,.4))" width="24.0" height="37.0" viewBox="0 0 24 37" stroke-width="2"><path d="M1.5 1.5V28.5L8 22.5 12.8 34 17.2 32 12.4 21H21.5z" fill="#111" stroke="#fff" stroke-width="1.6" stroke-linejoin="round"/></svg>
</body></html>
